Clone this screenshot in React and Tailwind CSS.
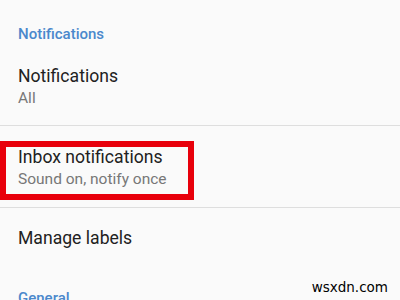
export default function App() {
  return (
    <div
      className="relative w-[400px] h-[300px] overflow-hidden bg-[#fafafa]"
      style={{ fontFamily: 'Roboto, "Liberation Sans", sans-serif' }}
    >
      {/* Section header */}
      <div className="px-[18px] pt-[24px] text-[15px] leading-[20px] font-medium text-[#4a88cc]">
        Notifications
      </div>

      {/* Notifications row */}
      <div className="px-[18px] pt-[20px] pb-[17px] border-b border-[#dedede]">
        <div className="text-[17.6px] leading-[24px] text-[#212121]">Notifications</div>
        <div className="text-[15.5px] leading-[20px] text-[#777]">All</div>
      </div>

      {/* Inbox notifications row */}
      <div className="px-[18px] pt-[19px] pb-[18px] border-b border-[#dedede]">
        <div className="text-[17.6px] leading-[24px] text-[#212121]">Inbox notifications</div>
        <div className="text-[15.5px] leading-[20px] text-[#777]">Sound on, notify once</div>
      </div>

      {/* Manage labels row */}
      <div className="px-[18px] pt-[18px] pb-[38px]">
        <div className="text-[17.6px] leading-[24px] text-[#212121]">Manage labels</div>
      </div>

      <div className="px-[18px] text-[15px] leading-[20px] font-medium text-[#4a88cc]">General</div>

      {/* Red highlight annotation */}
      <div className="absolute left-0 top-[141px] w-[194px] h-[59px] border-[6px] border-[#e8000b]" />

      {/* Watermark */}
      <div
        className="absolute right-[12px] bottom-[5px] text-[13.5px] leading-[16px] text-black"
        style={{ fontFamily: '"DejaVu Sans", sans-serif' }}
      >
        wsxdn.com
      </div>
    </div>
  )
}
